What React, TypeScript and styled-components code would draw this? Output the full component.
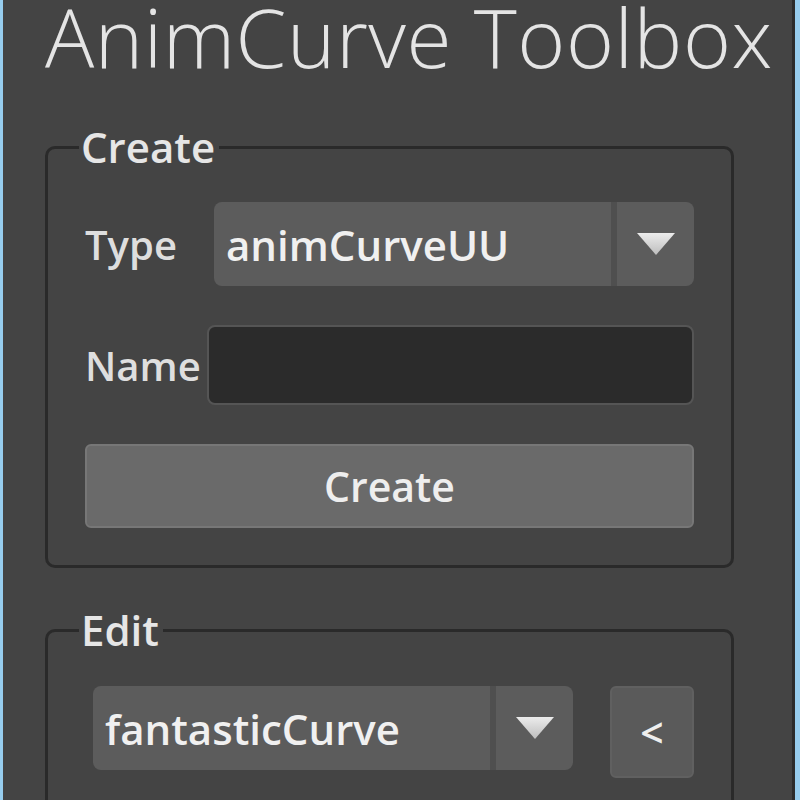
import React from "react";
import styled, { createGlobalStyle } from "styled-components";

const Global = createGlobalStyle`
  html, body { margin: 0; padding: 0; background: #444444; }
  * { box-sizing: border-box; }
`;

const Window = styled.div`
  width: 800px;
  height: 800px;
  display: flex;
  background: #444444;
  border-left: 3px solid #97cdee;
  border-right: 5px solid #97cdee;
  overflow: hidden;
  font-family: "Open Sans", "Noto Sans", sans-serif;
  color: #e6e6e6;
`;

const Panel = styled.div`
  flex: 1;
  border-right: 3px solid #2c2c2c;
  padding: 0 0 0 42px;
  display: flex;
  flex-direction: column;
`;

const Title = styled.h1`
  margin: 0;
  font-family: "Open Sans", sans-serif;
  font-weight: 300;
  font-size: 82px;
  line-height: 72px;
  height: 72px;
  flex-shrink: 0;
  letter-spacing: 0.5px;
  color: #e4e4e4;
  white-space: nowrap;
`;

const Group = styled.fieldset<{ $mt: number; $h?: number }>`
  margin: ${(p) => p.$mt}px 0 0 0;
  width: 689px;
  ${(p) => (p.$h ? `height: ${p.$h}px;` : "")}
  border: 3px solid #2a2a2a;
  border-radius: 10px;
  padding: 0 37px 0 37px;
  display: flex;
  flex-direction: column;
  flex-shrink: 0;
`;

const Legend = styled.legend`
  margin-left: -6px;
  padding: 0 4px 0 2px;
  font-size: 42px;
  font-weight: 600;
  line-height: 44px;
  color: #e6e6e6;
`;

const Row = styled.div<{ $mt: number; $align?: string }>`
  display: flex;
  align-items: ${(p) => p.$align || "center"};
  margin-top: ${(p) => p.$mt}px;
`;

const Label = styled.span<{ $w: number }>`
  width: ${(p) => p.$w}px;
  flex-shrink: 0;
  font-size: 40px;
  font-weight: 600;
  color: #dedede;
`;

const Combo = styled.div<{ $w: number; $ml?: number }>`
  width: ${(p) => p.$w}px;
  margin-left: ${(p) => p.$ml || 0}px;
  height: 84px;
  display: flex;
  background: #5c5c5c;
  border-radius: 8px;
  overflow: hidden;
`;

const ComboText = styled.div`
  flex: 1;
  display: flex;
  align-items: center;
  padding-left: 12px;
  font-size: 42px;
  font-weight: 600;
  color: #f0f0f0;
  white-space: nowrap;
  border-right: 6px solid #4f4f4f;
`;

const ComboArrow = styled.div`
  width: 77px;
  display: flex;
  align-items: center;
  justify-content: center;
`;

const TextInput = styled.div`
  flex: 1;
  height: 80px;
  background: #2b2b2b;
  border: 2px solid #555555;
  border-radius: 8px;
`;

const Button = styled.div<{ $w?: number; $ml?: number; $h: number; $bg: string; $bd: string }>`
  ${(p) => (p.$w ? `width: ${p.$w}px;` : "flex: 1;")}
  margin-left: ${(p) => p.$ml || 0}px;
  height: ${(p) => p.$h}px;
  background: ${(p) => p.$bg};
  border: 2px solid ${(p) => p.$bd};
  border-radius: 6px;
  display: flex;
  align-items: center;
  justify-content: center;
  font-size: 41px;
  font-weight: 600;
  color: #eeeeee;
`;

const Arrow = () => (
  <svg width="40" height="24" viewBox="0 0 40 24">
    <defs>
      <linearGradient id="ag" x1="0" y1="0" x2="0" y2="1">
        <stop offset="0" stopColor="#ececec" />
        <stop offset="1" stopColor="#bdbdbd" />
      </linearGradient>
    </defs>
    <path d="M1 1 L39 1 L20 23 Z" fill="url(#ag)" />
  </svg>
);

export default function App() {
  return (
    <>
      <Global />
      <Window>
        <Panel>
          <Title>AnimCurve Toolbox</Title>
          <Group $mt={53} $h={443}>
            <Legend>Create</Legend>
            <Row $mt={33}>
              <Label $w={129}>Type</Label>
              <Combo $w={480}>
                <ComboText>animCurveUU</ComboText>
                <ComboArrow>
                  <Arrow />
                </ComboArrow>
              </Combo>
            </Row>
            <Row $mt={39}>
              <Label $w={122}>Name</Label>
              <TextInput />
            </Row>
            <Row $mt={39}>
              <Button $h={84} $bg="#6a6a6a" $bd="#777777">Create</Button>
            </Row>
          </Group>
          <Group $mt={40} $h={240}>
            <Legend>Edit</Legend>
            <Row $mt={34} $align="flex-start">
              <Combo $w={480} $ml={8}>
                <ComboText>fantasticCurve</ComboText>
                <ComboArrow>
                  <Arrow />
                </ComboArrow>
              </Combo>
              <Button $w={84} $h={92} $ml={37} $bg="#5a5a5a" $bd="#606060">
                &lt;
              </Button>
            </Row>
          </Group>
        </Panel>
      </Window>
    </>
  );
}
